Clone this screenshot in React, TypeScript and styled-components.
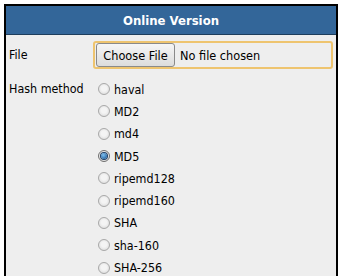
import React from 'react';
import styled, { createGlobalStyle } from 'styled-components';

const GlobalStyle = createGlobalStyle`
  body {
    margin: 0;
    background: #ffffff;
    font-family: "DejaVu Sans Condensed", "DejaVu Sans", Tahoma, sans-serif;
  }
`;

const Panel = styled.div`
  margin: 4px 0 0 4px;
  width: 334px;
  border: 2px solid #000;
  border-bottom: none;
  box-sizing: border-box;
  background: #eeeeee;
  height: 272px;
  overflow: hidden;
`;

const Header = styled.div`
  height: 28px;
  background: #336699;
  border-bottom: 1px solid #1d3d5c;
  color: #fff;
  font-weight: bold;
  font-size: 13px;
  display: flex;
  align-items: center;
  justify-content: center;
`;

const Row = styled.div<{ pad: number }>`
  display: grid;
  grid-template-columns: 87px 1fr;
  padding-top: ${({ pad }) => pad}px;
`;

const Label = styled.div<{ top: number }>`
  font-size: 12.4px;
  color: #000;
  padding-left: 3px;
  padding-top: ${({ top }) => top}px;
`;

const FileBox = styled.div`
  width: 240px;
  height: 28px;
  box-sizing: border-box;
  border: 2px solid #eec46f;
  border-radius: 3px;
  display: flex;
  align-items: center;
  gap: 5px;
  padding-left: 1px;
  font-size: 12.6px;
`;

const ChooseButton = styled.button`
  height: 24px;
  width: 79px;
  box-sizing: border-box;
  border: 1px solid #8a8a8a;
  border-radius: 3px;
  background: linear-gradient(#f6f6f6, #dcdcdc);
  font: inherit;
  font-size: 12.6px;
  color: #000;
  padding: 0;
`;

const RadioList = styled.div`
  display: flex;
  flex-direction: column;
  padding-left: 5px;
`;

const Option = styled.label`
  display: flex;
  align-items: center;
  gap: 4px;
  height: 22.3px;
  font-size: 12.4px;
  color: #000;
`;

const Dot = styled.span<{ checked: boolean }>`
  width: 12px;
  height: 12px;
  border-radius: 50%;
  box-sizing: border-box;
  border: 1px solid ${({ checked }) => (checked ? '#6f6f6f' : '#a8a8a8')};
  background: radial-gradient(circle at 50% 45%, #f4f4f4 35%, #d4d4d4 100%);
  display: flex;
  align-items: center;
  justify-content: center;
  &::after {
    content: '';
    display: ${({ checked }) => (checked ? 'block' : 'none')};
    width: 6px;
    height: 6px;
    border-radius: 50%;
    background: radial-gradient(circle at 40% 35%, #7fc0f0, #0d4c8c);
    box-shadow: 0 0 0 1px #1f3f66;
  }
`;

const methods = ['haval', 'MD2', 'md4', 'MD5', 'ripemd128', 'ripemd160', 'SHA', 'sha-160', 'SHA-256'];

export default function App() {
  return (
    <>
      <GlobalStyle />
      <Panel>
        <Header>Online Version</Header>
        <Row pad={6}>
          <Label top={6}>File</Label>
          <FileBox>
            <ChooseButton>Choose File</ChooseButton>
            <span>No file chosen</span>
          </FileBox>
        </Row>
        <Row pad={9}>
          <Label top={3}>Hash method</Label>
          <RadioList>
            {methods.map(m => (
              <Option key={m}>
                <Dot checked={m === 'MD5'} />
                {m}
              </Option>
            ))}
          </RadioList>
        </Row>
      </Panel>
    </>
  );
}
